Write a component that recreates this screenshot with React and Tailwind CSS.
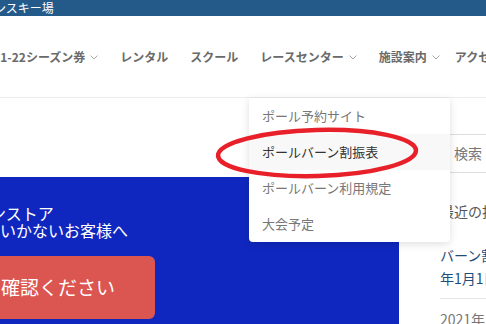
import React from 'react'

function Chevron() {
  return (
    <svg width="8" height="5" viewBox="0 0 8 5" className="ml-[5px] mt-[2px]">
      <path d="M0.5 0.5 L4 4 L7.5 0.5" fill="none" stroke="#aaa" strokeWidth="1" />
    </svg>
  )
}

const menu = [
  { label: 'ポール予約サイト' },
  { label: 'ポールバーン割振表', active: true },
  { label: 'ポールバーン利用規定' },
  { label: '大会予定' },
]

export default function App() {
  return (
    <div className="relative w-[486px] h-[324px] overflow-hidden bg-white font-['Noto_Sans_CJK_JP',sans-serif]">
      {/* top strip */}
      <div className="h-4 bg-[#245a8a] text-white text-[12px] leading-4 overflow-hidden whitespace-nowrap">
        <span className="inline-block ml-[-6px]">ンスキー場</span>
      </div>

      {/* main nav */}
      <nav className="h-[82px] border-b border-[#ececec] flex items-center whitespace-nowrap text-[12px] font-bold text-[#6a6a6a] gap-[22px] overflow-hidden">
        <div className="flex items-center ml-[-21px]">
          <span>2021-22シーズン券</span>
          <Chevron />
        </div>
        <span>レンタル</span>
        <span>スクール</span>
        <div className="flex items-center">
          <span>レースセンター</span>
          <Chevron />
        </div>
        <div className="flex items-center mr-[-3px]">
          <span>施設案内</span>
          <Chevron />
        </div>
        <span className="ml-[-4px]">アクセス</span>
      </nav>

      <div className="flex">
        {/* hero */}
        <div className="w-[399px] shrink-0 pt-[79px]">
          <div className="bg-[#0f27bf] h-[160px] pt-[27px] overflow-hidden text-white">
            <div className="text-[16px] leading-[18px] whitespace-nowrap ml-[-10px]">ンストア</div>
            <div className="text-[16px] leading-[17px] whitespace-nowrap">いかないお客様へ</div>
            <div className="mt-[17px] ml-[-10px] w-[165px] h-[63px] rounded-md bg-[#db5551] flex items-center overflow-hidden">
              <span className="text-[19px] whitespace-nowrap ml-[-8px]">を確認ください</span>
            </div>
          </div>
        </div>

        {/* sidebar */}
        <div className="ml-[41px] flex-1 pt-[36px] whitespace-nowrap">
          <div className="h-[39px] ml-[-30px] mr-[-10px] border border-[#dddddd] flex items-center pl-[43px] text-[14px] text-[#777]">検索</div>
          <div className="mt-[28px] text-[14px] leading-5 text-[#555]">最近の投稿</div>
          <div className="mt-[23px] text-[14px] leading-[23px] text-[#1f4e7a]">
            <div>バーン割振表</div>
            <div>年1月1日〜</div>
          </div>
          <div className="mt-[8px] border-t border-[#e5e5e5]"></div>
          <div className="mt-[10px] text-[14px] leading-5 text-[#777]">2021年</div>
        </div>
      </div>

      {/* dropdown */}
      <div className="absolute left-[249px] top-[98px] w-[201px] bg-white shadow-[0_2px_8px_rgba(0,0,0,0.13)] rounded-b-sm">
        {menu.map((m) => (
          <div
            key={m.label}
            className={`h-9 flex items-center pl-[13px] text-[13px] whitespace-nowrap ${m.active ? 'bg-[#f8f8f8] text-[#333]' : 'text-[#777]'}`}
          >
            {m.label}
          </div>
        ))}
      </div>

      {/* red annotation */}
      <svg className="absolute left-[212px] top-[124px]" width="212" height="60" viewBox="0 0 212 60">
        <ellipse cx="105" cy="29" rx="99" ry="23" fill="none" stroke="#e8202a" strokeWidth="4.5" transform="rotate(-1.5 105 29)" />
      </svg>
    </div>
  )
}
